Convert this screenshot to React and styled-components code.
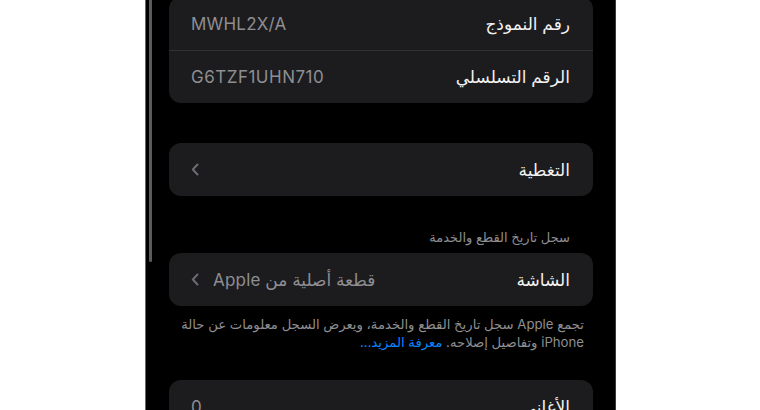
import React from "react";
import styled, { createGlobalStyle } from "styled-components";

const GlobalStyle = createGlobalStyle`
  html, body {
    margin: 0;
    padding: 0;
    background: #ffffff;
  }
  body {
    font-family: "Inter", "Noto Sans", "DejaVu Sans", sans-serif;
  }
`;

const Page = styled.div`
  width: 760px;
  height: 410px;
  overflow: hidden;
  background: #ffffff;
`;

const Screen = styled.div`
  position: relative;
  box-sizing: border-box;
  width: 471px;
  height: 410px;
  margin-left: 145px;
  background: #000000;
  border-left: 1px solid #6a6a6a;
  border-right: 1px solid #3a3a3a;
  overflow: hidden;
  direction: rtl;
`;

const ScrollBar = styled.div`
  position: absolute;
  left: 3px;
  top: -6px;
  width: 3px;
  height: 268px;
  border-radius: 2px;
  background: #5b5b5e;
`;

const Content = styled.div`
  display: flex;
  flex-direction: column;
  padding: 0 22px 0 23px;
  margin-top: -3px;
`;

const Card = styled.div`
  background: #1c1c1e;
  border-radius: 12px;
  margin-top: ${(p) => p.$gap || 0}px;
  overflow: hidden;
`;

const Row = styled.div`
  display: flex;
  align-items: center;
  justify-content: space-between;
  height: 53px;
  padding: 0 23px 0 22px;
  & + & {
    border-top: 1px solid #323234;
    height: 52px;
  }
`;

const Label = styled.span`
  font-size: 17px;
  color: #f2f2f2;
`;

const Value = styled.span`
  display: flex;
  align-items: center;
  gap: 14px;
  font-size: 17px;
  color: #8e8e93;
  letter-spacing: ${(p) => (p.$wide ? 0.5 : 0.2)}px;
`;

const Header = styled.div`
  margin: 33px 23px 8px 0;
  font-size: 13px;
  color: #8e8e93;
`;

const Footer = styled.div`
  margin: 9px 9px 0 0;
  font-size: 13.2px;
  line-height: 18px;
  color: #8e8e93;
  white-space: nowrap;
`;

const Link = styled.span`
  color: #0a84ff;
`;

const Chevron = () => (
  <svg width="8" height="13" viewBox="0 0 8 13" fill="none">
    <polyline
      points="6.5,1.5 1.8,6.5 6.5,11.5"
      stroke="#6c6c70"
      strokeWidth="2"
      strokeLinecap="round"
      strokeLinejoin="round"
    />
  </svg>
);

export default function App() {
  return (
    <Page>
      <GlobalStyle />
      <Screen>
        <ScrollBar />
        <Content>
          <Card>
            <Row>
              <Label>رقم النموذج</Label>
              <Value dir="ltr">MWHL2X/A</Value>
            </Row>
            <Row>
              <Label>الرقم التسلسلي</Label>
              <Value dir="ltr" $wide>
                G6TZF1UHN710
              </Value>
            </Row>
          </Card>

          <Card $gap={40}>
            <Row>
              <Label>التغطية</Label>
              <Value>
                <Chevron />
              </Value>
            </Row>
          </Card>

          <Header>سجل تاريخ القطع والخدمة</Header>
          <Card>
            <Row>
              <Label>الشاشة</Label>
              <Value>
                <span>قطعة أصلية من Apple</span>
                <Chevron />
              </Value>
            </Row>
          </Card>
          <Footer>
            تجمع Apple سجل تاريخ القطع والخدمة، ويعرض السجل معلومات عن حالة
            <br />
            iPhone وتفاصيل إصلاحه. <Link>معرفة المزيد...</Link>
          </Footer>

          <Card $gap={29}>
            <Row>
              <Label>الأغاني</Label>
              <Value>0</Value>
            </Row>
          </Card>
        </Content>
      </Screen>
    </Page>
  );
}
